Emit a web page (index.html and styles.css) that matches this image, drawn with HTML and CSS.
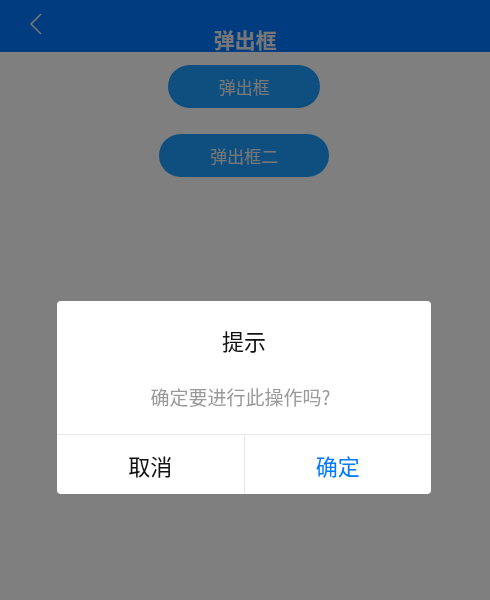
FILE: index.html
```html
<!DOCTYPE html>
<html lang="zh">
<head>
<meta charset="utf-8">
<title>弹出框</title>
<link rel="stylesheet" href="styles.css">
</head>
<body>
<header class="nav">
  <span class="back">
    <svg width="14" height="24" viewBox="0 0 14 24"><path d="M12 2 L2 12 L12 22" fill="none" stroke="#eeeeee" stroke-width="1.6"/></svg>
  </span>
  <h1 class="nav-title">弹出框</h1>
</header>
<main class="content">
  <button class="pill pill-one">弹出框</button>
  <button class="pill pill-two">弹出框二</button>
</main>
<div class="mask"></div>
<div class="dialog">
  <div class="dialog-title">提示</div>
  <div class="dialog-msg">确定要进行此操作吗?</div>
  <div class="dialog-actions">
    <div class="action cancel">取消</div>
    <div class="action ok">确定</div>
  </div>
</div>
</body>
</html>
```
FILE: styles.css
```css
* { box-sizing: border-box; }
html, body { margin: 0; padding: 0; height: 100%; }
body {
  background: #ffffff;
  font-family: "Noto Sans CJK SC", "Noto Sans", sans-serif;
}
.nav {
  height: 52px;
  background: #0078fe;
  display: flex;
  justify-content: center;
  position: relative;
}
.back {
  position: absolute;
  left: 29px;
  top: 12px;
  width: 14px;
  height: 24px;
  display: flex;
}
.nav-title {
  margin: 0;
  padding-top: 25px;
  font-size: 21px;
  line-height: 28px;
  font-weight: 700;
  color: #eeeeee;
}
.content {
  display: flex;
  flex-direction: column;
  align-items: center;
  padding-top: 13px;
  gap: 26px;
}
.pill {
  border: none;
  height: 43px;
  border-radius: 22px;
  background: #1e9fff;
  color: #eeeeee;
  font-family: inherit;
  font-size: 17px;
  padding: 0;
}
.pill-one { width: 152px; margin-left: -2px; }
.pill-two { width: 170px; margin-left: -2px; }
.mask {
  position: fixed;
  inset: 0;
  background: rgba(0, 0, 0, 0.5);
}
.dialog {
  position: fixed;
  left: 57px;
  top: 301px;
  width: 374px;
  background: #ffffff;
  border-radius: 4px;
  overflow: hidden;
}
.dialog-title {
  text-align: center;
  font-size: 22px;
  line-height: 30px;
  color: #111111;
  padding-top: 24px;
}
.dialog-msg {
  text-align: center;
  font-size: 19px;
  line-height: 26px;
  color: #999999;
  padding-top: 29px;
  padding-bottom: 24px;
  padding-right: 7px;
}
.dialog-actions {
  display: flex;
  border-top: 1px solid #e8e8e8;
  height: 60px;
}
.action {
  flex: 1;
  display: flex;
  align-items: center;
  justify-content: center;
  font-size: 22px;
}
.cancel { color: #111111; border-right: 1px solid #e8e8e8; }
.ok { color: #007aff; }
```
